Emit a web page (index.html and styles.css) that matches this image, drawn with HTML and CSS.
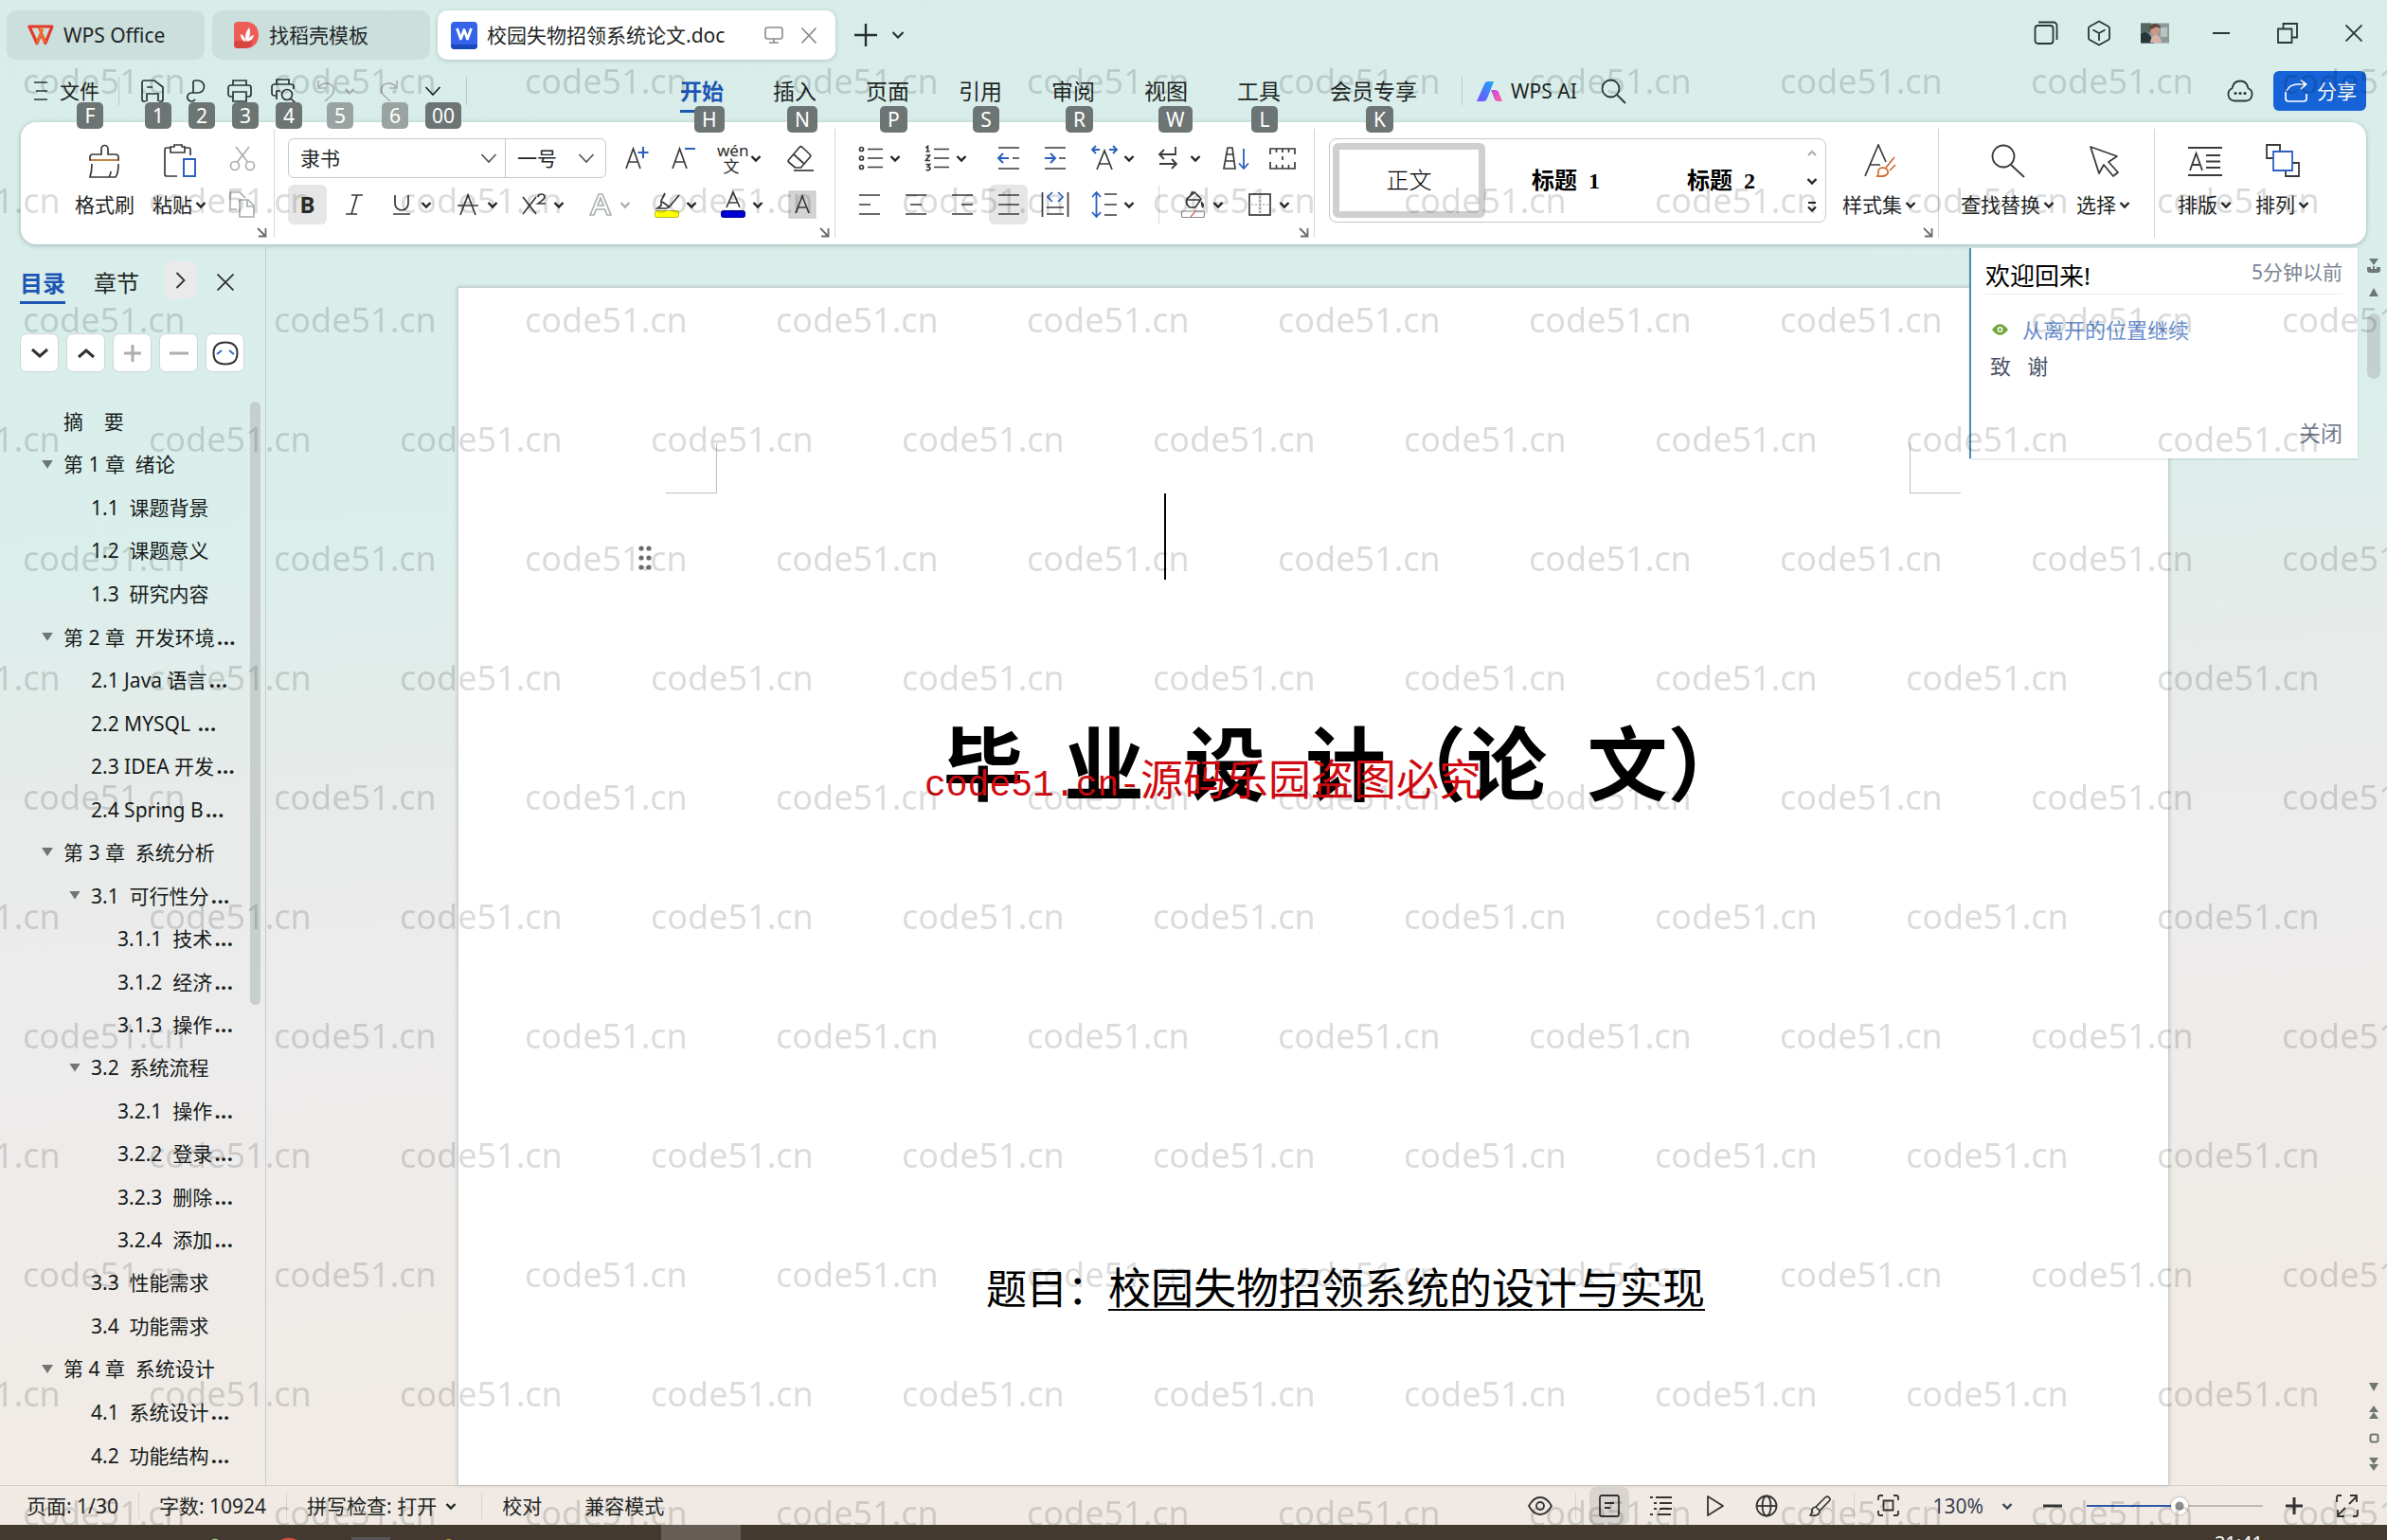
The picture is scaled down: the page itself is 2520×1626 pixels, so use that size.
FILE: index.html
```html
<!DOCTYPE html>
<html lang="zh-CN">
<head>
<meta charset="utf-8">
<title>校园失物招领系统论文.doc - WPS Office</title>
<meta name="viewport" content="width=device-width, initial-scale=1">
<link rel="stylesheet" href="styles.css">
</head>
<body>
<svg class="defs" aria-hidden="true">
  <symbol id="caret" viewBox="0 0 14 14"><path d="M2.500 5l4.500 4.500L11.500 5" fill="none" stroke="currentColor" stroke-width="2.400"/></symbol>
  <symbol id="chev" viewBox="0 0 18 12"><path d="M1.500 2l7.500 8 7.500-8" fill="none" stroke="currentColor" stroke-width="1.700"/></symbol>
  <symbol id="launch" viewBox="0 0 12 12"><path d="M2 2l7.500 7.500M10.500 2v8.500H3" fill="none" stroke="currentColor" stroke-width="1.800"/></symbol>
</svg>

<header class="titlebar">
  <nav class="doctabs" aria-label="文档标签">
    <button class="doctab tab-home">
      <svg width="28" height="22" viewBox="0 0 28 22" fill="none"><path d="M2 2h24L19 19.500 14.500 9.500 10 19.500z" stroke="#e23a2a" stroke-width="3.200" stroke-linejoin="round"/><path d="M10 19.500L16 4.500M12 3l7 16" stroke="#ef6a2c" stroke-width="2.800"/></svg>
      <span>WPS Office</span>
    </button>
    <button class="doctab tab-docer">
      <svg width="26" height="30" viewBox="0 0 26 30"><path d="M4 1h8c9 0 14 6 14 14s-5 14-14 14H4a4 4 0 0 1-4-4V5a4 4 0 0 1 4-4z" fill="#ef5d58"/><path d="M0 25a4 4 0 0 1 4-4h16l-2 6c-2 1-4 2-6 2H4a4 4 0 0 1-4-4z" fill="#d8453f"/><path d="M13 22c-2-5-1-10 3-15 2 5 1 10-3 15zM12 22c-3-1-5-4-5-8 3 1 5 4 5 8zM14 22c1-4 3-6 7-7-1 4-3 6-7 7z" fill="#fff"/></svg>
      <span>找稻壳模板</span>
    </button>
    <button class="doctab tab-doc">
      <svg width="28" height="29" viewBox="0 0 28 29"><rect width="28" height="29" rx="4" fill="#3563ea"/><path d="M0 24h28v1a4 4 0 0 1-4 4H4a4 4 0 0 1-4-4z" fill="#1d49bf"/><path d="M6.500 7l4 11L14 8.500 17.500 18l4-11" fill="none" stroke="#fff" stroke-width="2.800" stroke-linejoin="round"/></svg>
      <span>校园失物招领系统论文.doc</span>
      <svg class="tab-screen" width="20" height="18" viewBox="0 0 20 18" fill="none" stroke="#8b8b8b" stroke-width="1.600"><rect x="1" y="1" width="18" height="12" rx="2.500"/><path d="M10 13v4M5 17h10"/></svg>
      <svg width="16" height="17" viewBox="0 0 16 17" stroke="#8b8b8b" stroke-width="1.600"><path d="M.5.500l15 16M15.500.500l-15 16"/></svg>
    </button>
  </nav>
  <button class="newtab" aria-label="新建"><svg width="24" height="24" viewBox="0 0 24 24" stroke="#26302f" stroke-width="2.400"><path d="M12 0v24M0 12h24"/></svg></button>
  <button class="tablist" aria-label="标签列表"><svg width="12" height="8" viewBox="0 0 12 8"><path d="M.500 1L6 6.500 11.500 1" fill="none" stroke="#26302f" stroke-width="2"/></svg></button>
  <div class="wincontrols">
    <button aria-label="标签视图"><svg width="26" height="26" viewBox="0 0 26 26" fill="none" stroke="#2b3635" stroke-width="1.800"><rect x="1.500" y="5" width="19" height="19" rx="3"/><path d="M5 1.500h16a3.500 3.500 0 0 1 3.500 3.500v15"/></svg></button>
    <button aria-label="应用"><svg width="26" height="28" viewBox="0 0 26 28" fill="none" stroke="#2b3635" stroke-width="1.800" stroke-linejoin="round"><path d="M13 1.500l10 5.500q1 .6 1 2v10q0 1.400-1 2l-10 5.500-10-5.500q-1-.6-1-2v-10q0-1.400 1-2zM6.500 10.500L13 14l6.500-3.500M13 14v8"/></svg></button>
    <button class="account" aria-label="账户"><svg width="30" height="36" viewBox="0 0 30 36"><rect y="7.500" width="30" height="21" fill="#8b9a95"/><rect y="7.500" width="11" height="10" fill="#55685f"/><path d="M0 28.500v-10q6-4 10 2l4 8z" fill="#26363a"/><ellipse cx="15" cy="15" rx="5" ry="6" fill="#c9978a"/><path d="M9 15q0-7 6-7t6 5q-5-3-8 0z" fill="#5b4640"/><path d="M10 28q1-8 6-8t6 8z" fill="#d9b3a6"/><path d="M21 12h7v10h-7z" fill="#b9c4c2"/></svg></button>
    <button class="win-wide" aria-label="最小化"><svg width="18" height="2" viewBox="0 0 18 2"><path d="M0 1h18" stroke="#2b3635" stroke-width="2"/></svg></button>
    <button class="win-wide" aria-label="还原"><svg width="22" height="22" viewBox="0 0 22 22" fill="none" stroke="#2b3635" stroke-width="1.800"><path d="M1 6.500h14.500V21H1zM6.500 6V1H21v14.500h-5"/></svg></button>
    <button class="win-wide" aria-label="关闭"><svg width="18" height="18" viewBox="0 0 18 18" stroke="#2b3635" stroke-width="1.800"><path d="M.5.500l17 17M17.500.500l-17 17"/></svg></button>
  </div>
</header>

<div class="menubar">
  <button class="filemenu"><svg width="16" height="20" viewBox="0 0 16 20" stroke="#2b3635" stroke-width="1.700"><path d="M1 1h14M3 10h12M1 19h14"/></svg><span>文件</span><kbd class="key key-file">F</kbd></button>
  <i class="vsep"></i>
  <div class="quick">
    <button aria-label="保存"><svg width="24" height="24" viewBox="0 0 24 24" fill="none" stroke="#2b3635" stroke-width="1.700"><path d="M5 23H3a2 2 0 0 1-2-2V3a2 2 0 0 1 2-2h11l9 7v13a2 2 0 0 1-2 2h-2M6 23v-8h12v8M6 8h6"/></svg><kbd class="key">1</kbd></button>
    <button aria-label="输出为PDF"><svg width="24" height="24" viewBox="0 0 24 24" fill="none" stroke="#2b3635" stroke-width="1.700"><path d="M9 14V3q0-2 2-2h3a6.500 6.500 0 0 1 0 13H7a4.500 4.500 0 1 0 4 7"/></svg><kbd class="key">2</kbd></button>
    <button aria-label="打印"><svg width="26" height="24" viewBox="0 0 26 24" fill="none" stroke="#2b3635" stroke-width="1.700"><path d="M6 6V1h14v5M6 18H3.500A2.500 2.500 0 0 1 1 15.500v-7A2.500 2.500 0 0 1 3.500 6h19A2.500 2.500 0 0 1 25 8.500v7a2.500 2.500 0 0 1-2.500 2.500H20M6 13h14v10H6z"/></svg><kbd class="key">3</kbd></button>
    <button aria-label="打印预览"><svg width="26" height="26" viewBox="0 0 26 26" fill="none" stroke="#2b3635" stroke-width="1.700"><path d="M6 6V1h13v5M6 18H3.500A2.500 2.500 0 0 1 1 15.500v-7A2.500 2.500 0 0 1 3.500 6h18A2.500 2.500 0 0 1 24 8.500V11M6 22v-9h4"/><circle cx="17" cy="17" r="5.500"/><path d="M21 21l4.500 4.500"/></svg><kbd class="key">4</kbd></button>
    <button class="dim quick-dd" aria-label="撤销"><svg width="20" height="24" viewBox="0 0 20 24" fill="none" stroke="currentColor" stroke-width="1.700"><path d="M2 1v8h8M2 9q4-6 10-5 6 1 6.500 7 0 3-2 5L9 23"/></svg><svg width="14" height="14"><use href="#caret"/></svg><kbd class="key key-dim">5</kbd></button>
    <button class="dim" aria-label="恢复"><svg width="20" height="24" viewBox="0 0 20 24" fill="none" stroke="currentColor" stroke-width="1.700"><path d="M18 1v8h-8M18 9Q14 3 8 4q-6 1-6.500 7 0 3 2 5l7.500 7"/></svg><kbd class="key key-dim">6</kbd></button>
    <button aria-label="自定义"><svg width="18" height="12"><use href="#chev"/></svg><kbd class="key">00</kbd></button>
  </div>
  <i class="vsep"></i>
  <nav class="tabs" aria-label="功能区">
    <a href="#" class="on">开始<kbd class="key">H</kbd></a>
    <a href="#">插入<kbd class="key">N</kbd></a>
    <a href="#">页面<kbd class="key">P</kbd></a>
    <a href="#">引用<kbd class="key">S</kbd></a>
    <a href="#">审阅<kbd class="key">R</kbd></a>
    <a href="#">视图<kbd class="key">W</kbd></a>
    <a href="#">工具<kbd class="key">L</kbd></a>
    <a href="#" class="vip">会员专享<kbd class="key">K</kbd></a>
  </nav>
  <i class="vsep"></i>
  <button class="ai"><svg width="27" height="21" viewBox="0 0 27 21"><defs><linearGradient id="aiA" x1="0" y1="1" x2="1" y2="0"><stop offset="0" stop-color="#7a4dff"/><stop offset="1" stop-color="#18a8f5"/></linearGradient><linearGradient id="aiB" x1="0" y1="0" x2="1" y2="1"><stop offset="0" stop-color="#c04be8"/><stop offset="1" stop-color="#ff5f9e"/></linearGradient></defs><path d="M0 21L8.500 2Q9.500 0 12 0h6L11 18q-1 3-4 3z" fill="url(#aiA)"/><path d="M15 9h5q2 0 3 2l4 10h-5q-2 0-3-2z" fill="url(#aiB)"/></svg><span>WPS AI</span></button>
  <button class="find" aria-label="搜索"><svg width="27" height="27" viewBox="0 0 27 27" fill="none" stroke="#2b3635" stroke-width="1.800"><circle cx="10.500" cy="10.500" r="9"/><path d="M17 17l9 9"/></svg></button>
  <button class="cloud" aria-label="云同步"><svg width="28" height="24" viewBox="0 0 28 24"><path d="M8 22.500a7 7 0 0 1-2.500-13.300Q7 1.500 14 1.500t8.500 7.700A7 7 0 0 1 20 22.500z" fill="none" stroke="#2b3635" stroke-width="1.800"/><g fill="#2b3635"><circle cx="9" cy="14.500" r="1.600"/><circle cx="14" cy="14.500" r="1.600"/><circle cx="19" cy="14.500" r="1.600"/></g></svg></button>
  <button class="share"><svg width="24" height="24" viewBox="0 0 24 24" fill="none" stroke="#fff" stroke-width="1.700"><path d="M1 13v7a3 3 0 0 0 3 3h16a3 3 0 0 0 3-3v-5M2 12q3-7 12-7h8M17 .500L22.500 5 17 10"/></svg><span>分享</span></button>
</div>

<section class="ribbon" aria-label="开始">
  <div class="group g-clip">
    <div class="body">
      <button class="big"><svg width="34" height="36" viewBox="0 0 34 36" fill="none" stroke="#3a3a3a" stroke-width="1.700"><path d="M13 11V5a3.500 3.500 0 0 1 7 0v6h8a3 3 0 0 1 3 3v3H1v-3a3 3 0 0 1 3-3zM3 21q0 8-2 14h27q3-4 3-14M21 35q2-3 2-6"/><path d="M2 17h28" stroke="#d08a3c"/></svg><span>格式刷</span></button>
      <button class="big"><svg width="36" height="36" viewBox="0 0 36 36" fill="none" stroke="#3a3a3a" stroke-width="1.700"><path d="M15 34H4a2 2 0 0 1-2-2V6a2 2 0 0 1 2-2h4M23 4h4a2 2 0 0 1 2 2v6M8 9V3h4V1h8v2h3v6z"/><path d="M22 16h12v18H22z" stroke="#2b62c0" stroke-width="2"/></svg><span>粘贴<svg width="14" height="14"><use href="#caret"/></svg></span></button>
      <div class="rows">
        <button class="sm dim" aria-label="剪切"><svg width="28" height="28" viewBox="0 0 28 28" fill="none" stroke="currentColor" stroke-width="1.700"><circle cx="6" cy="22" r="4.500"/><circle cx="22" cy="22" r="4.500"/><path d="M8.500 18L21 2M19.500 18L7 2"/></svg></button>
        <button class="sm dim" aria-label="复制"><svg width="30" height="30" viewBox="0 0 30 30" fill="none" stroke="currentColor" stroke-width="1.700"><path d="M9 20H2V2h10l6 6M12 10h9l6 6v12H12zM20 10v7h7"/></svg></button>
      </div>
    </div>
    <button class="launcher" aria-label="剪贴板选项"><svg width="12" height="12"><use href="#launch"/></svg></button>
  </div>

  <div class="group g-font">
    <div class="rows">
      <div class="row">
        <div class="fontbox">
          <label class="pick pick-name"><select aria-label="字体"><option>隶书</option></select><svg width="18" height="12"><use href="#chev"/></svg></label>
          <label class="pick pick-size"><select aria-label="字号"><option>一号</option></select><svg width="18" height="12"><use href="#chev"/></svg></label>
        </div>
        <button class="sm" aria-label="增大字号"><svg width="30" height="30" viewBox="0 0 30 30" fill="none" stroke="#3a3a3a" stroke-width="1.700"><path d="M3 26L10.500 5 18 26M6 19h9"/><path d="M21 3v12M15.500 9h11" stroke="#2b5fc0" stroke-width="2"/></svg></button>
        <button class="sm" aria-label="减小字号"><svg width="30" height="30" viewBox="0 0 30 30" fill="none" stroke="#3a3a3a" stroke-width="1.700"><path d="M3 26L10.500 5 18 26M6 19h9"/><path d="M16 5h11" stroke="#2b5fc0" stroke-width="2"/></svg></button>
        <button class="dd" aria-label="拼音指南"><span class="pinyin"><b>wén</b><b>文</b></span><svg width="14" height="14"><use href="#caret"/></svg></button>
        <button class="sm sm-end" aria-label="清除格式"><svg width="30" height="30" viewBox="0 0 30 30" fill="none" stroke="#3a3a3a" stroke-width="1.700" stroke-linejoin="round"><path d="M2.500 17L14 3.500q1.500-1.500 3 0L25 11q1.500 1.500 0 3L15.500 25h-6l-7-6q-1-1 0-2zM8 11l11 10"/><path d="M8 28h21"/></svg></button>
      </div>
      <div class="row">
        <button class="sm active" aria-label="加粗"><b class="glyph">B</b></button>
        <button class="sm" aria-label="倾斜"><svg width="30" height="30" viewBox="0 0 30 30" stroke="#3a3a3a" stroke-width="1.700"><path d="M12 5h12M6 25h12M18 5l-6 20"/></svg></button>
        <button class="dd" aria-label="下划线"><svg width="30" height="30" viewBox="0 0 30 30" fill="none" stroke="#3a3a3a" stroke-width="1.700"><path d="M8 5v9a7 7 0 0 0 14 0V5M6 25h18"/></svg><svg width="14" height="14"><use href="#caret"/></svg></button>
        <button class="dd" aria-label="删除线"><svg width="30" height="30" viewBox="0 0 30 30" fill="none" stroke="#3a3a3a" stroke-width="1.700"><path d="M7 26l8-21 8 21M4 16h22"/></svg><svg width="14" height="14"><use href="#caret"/></svg></button>
        <button class="dd" aria-label="上标"><svg width="30" height="30" viewBox="0 0 30 30" fill="none" stroke="#3a3a3a" stroke-width="1.700"><path d="M3 7l14 18M17 7L3 25M19 7q0-3 3.500-3t3.500 3q0 2-7 7h8"/></svg><svg width="14" height="14"><use href="#caret"/></svg></button>
        <button class="dd dim" aria-label="文字效果"><svg width="30" height="30" viewBox="0 0 30 30" fill="none" stroke="currentColor" stroke-width="1.600"><path d="M4 26L13 4h4l9 22h-4l-2.500-6h-9L8 26zM12 16h6l-3-8z"/></svg><svg width="14" height="14"><use href="#caret"/></svg></button>
        <button class="dd" aria-label="突出显示"><svg width="30" height="30" viewBox="0 0 30 30" fill="none" stroke="#3a3a3a" stroke-width="1.700"><path d="M13 3L9 11v5l-4 3h9l3-1L28 5M10 12l7 5M5 19h9"/><rect x="2.500" y="21.500" width="25" height="7" rx="2" fill="#ffff00" stroke="#b9b92a" stroke-width="1"/></svg><svg width="14" height="14"><use href="#caret"/></svg></button>
        <button class="dd" aria-label="字体颜色"><svg width="30" height="30" viewBox="0 0 30 30" fill="none" stroke="#3a3a3a" stroke-width="1.700"><path d="M8 18l7-16 7 16M10.500 13h9"/><rect x="2.500" y="21.500" width="25" height="7" rx="2" fill="#0000d8" stroke="#0000a0" stroke-width="1"/></svg><svg width="14" height="14"><use href="#caret"/></svg></button>
        <button class="sm sm-end" aria-label="字符底纹"><svg width="30" height="30" viewBox="0 0 30 30" fill="none" stroke="#3a3a3a" stroke-width="1.700"><rect x="1" y="1" width="28" height="28" fill="#d4d4d4" stroke="#c2c2c2" stroke-width="1"/><path d="M8 24l7-18 7 18M10.500 18h9"/></svg></button>
      </div>
    </div>
    <button class="launcher" aria-label="字体选项"><svg width="12" height="12"><use href="#launch"/></svg></button>
  </div>

  <div class="group g-para">
    <div class="rows">
      <div class="row">
        <button class="dd" aria-label="项目符号"><svg width="30" height="30" viewBox="0 0 30 30" fill="none" stroke="#3a3a3a" stroke-width="1.700"><circle cx="5.500" cy="5.500" r="2"/><circle cx="5.500" cy="15" r="2"/><circle cx="5.500" cy="24.500" r="2"/><path d="M12 5.500h16M12 15h16M12 24.500h16"/></svg><svg width="14" height="14"><use href="#caret"/></svg></button>
        <button class="dd" aria-label="编号"><svg width="30" height="30" viewBox="0 0 30 30" fill="none" stroke="#3a3a3a" stroke-width="1.700"><path d="M12 5.500h16M12 15h16M12 24.500h16M3.500 4l2-1.500V8M3.500 8h4M3.500 12h4l-4 5.500h4.500M3.500 21.500h4l-2 2.500q2.500 0 2.500 2t-4.500 1.500"/></svg><svg width="14" height="14"><use href="#caret"/></svg></button>
        <span class="gap7"></span>
        <button class="sm" aria-label="减少缩进"><svg width="30" height="30" viewBox="0 0 30 30" fill="none" stroke="#3a3a3a" stroke-width="1.700"><path d="M4 4h22M4 26h22M19 15h7"/><path d="M15 15H4M9 10l-5 5 5 5" stroke="#2b5fc0" stroke-width="2"/></svg></button>
        <button class="sm" aria-label="增加缩进"><svg width="30" height="30" viewBox="0 0 30 30" fill="none" stroke="#3a3a3a" stroke-width="1.700"><path d="M4 4h22M4 26h22M19 15h7"/><path d="M4 15h11M10 10l5 5-5 5" stroke="#2b5fc0" stroke-width="2"/></svg></button>
        <button class="dd dd-in" aria-label="中文版式"><svg width="30" height="30" viewBox="0 0 30 30" fill="none" stroke="#3a3a3a" stroke-width="1.700"><path d="M7 27l8-20 8 20M9.500 21h11"/><path d="M10 6H2M6 2L2 6l4 4M20 6h8M24 2l4 4-4 4" stroke="#2b5fc0" stroke-width="1.800"/></svg><svg width="14" height="14"><use href="#caret"/></svg></button>
        <button class="dd" aria-label="换行"><svg width="30" height="30" viewBox="0 0 30 30" fill="none" stroke="#3a3a3a" stroke-width="1.800"><path d="M20 3v8H3M8 6l-5 5 5 5M3 21h18M16 16l5 5-5 5"/></svg><svg width="14" height="14"><use href="#caret"/></svg></button>
        <button class="sm" aria-label="排序"><svg width="30" height="30" viewBox="0 0 30 30" fill="none" stroke="#3a3a3a" stroke-width="1.700"><path d="M2 26L6 4h5l3 22zM5 11h7M4 18h9"/><path d="M23 5v21M18 20.500l5 5.500 5-5.500" stroke="#2b5fc0" stroke-width="1.800"/></svg></button>
        <button class="sm" aria-label="标尺"><svg width="30" height="30" viewBox="0 0 30 30" fill="none" stroke="#3a3a3a" stroke-width="1.700"><path d="M2 11V5h26v6M2 19v7h26v-7M8.500 5v4M15 5v4M21.500 5v4M8.500 26v-4M15 26v-4M21.500 26v-4M15 13v4"/></svg></button>
      </div>
      <div class="row">
        <button class="sm" aria-label="左对齐"><svg width="30" height="30" viewBox="0 0 30 30" stroke="#3a3a3a" stroke-width="1.700"><path d="M4 5h22M4 15h12M4 25h22"/></svg></button>
        <button class="sm" aria-label="居中"><svg width="30" height="30" viewBox="0 0 30 30" stroke="#3a3a3a" stroke-width="1.700"><path d="M4 5h22M9 15h12M4 25h22"/></svg></button>
        <button class="sm" aria-label="右对齐"><svg width="30" height="30" viewBox="0 0 30 30" stroke="#3a3a3a" stroke-width="1.700"><path d="M4 5h22M14 15h12M4 25h22"/></svg></button>
        <button class="sm active" aria-label="两端对齐"><svg width="30" height="30" viewBox="0 0 30 30" stroke="#3a3a3a" stroke-width="1.700"><path d="M4 5h22M4 15h22M4 25h22"/></svg></button>
        <button class="sm" aria-label="分散对齐"><svg width="30" height="30" viewBox="0 0 30 30" fill="none" stroke="#3a3a3a" stroke-width="1.700"><path d="M1.500 2v26M28.500 2v26M6 18h18M6 25h18"/><path d="M12 2L7 7l5 5M18 2l5 5-5 5" stroke="#2b5fc0"/></svg></button>
        <button class="dd dd-in" aria-label="行距"><svg width="30" height="30" viewBox="0 0 30 30" fill="none" stroke="#3a3a3a" stroke-width="1.700"><path d="M15 4h13M15 15h13M15 26h13"/><path d="M6.500 3v24M2 7l4.500-5L11 7M2 23l4.500 5 4.500-5" stroke="#2b5fc0" stroke-width="1.800"/></svg><svg width="14" height="14"><use href="#caret"/></svg></button>
        <i class="rsep"></i>
        <button class="dd" aria-label="底纹颜色"><svg width="30" height="30" viewBox="0 0 30 30" fill="none" stroke="#3a3a3a" stroke-width="1.700"><path d="M8 9l8-7 7 7-6 9h-6q-5-4-3-9zM14 1l-2 4M8 10h14"/><path d="M23 11q5 4 2 8-3-2-2-8z" fill="#3a3a3a" stroke="none"/><rect x="2.500" y="22" width="24" height="6.500" rx="1.500" stroke="#8a8a8a" stroke-width="1.200"/><path d="M12 28l5-6" stroke="#e06060" stroke-width="1.200"/></svg><svg width="14" height="14"><use href="#caret"/></svg></button>
        <button class="dd" aria-label="边框"><svg width="30" height="30" viewBox="0 0 30 30" fill="none" stroke="#3a3a3a" stroke-width="1.700"><rect x="4" y="4" width="22" height="22"/><path d="M15 6v18M6 15h18" stroke="#b5b5b5" stroke-dasharray="2 2"/></svg><svg width="14" height="14"><use href="#caret"/></svg></button>
      </div>
    </div>
    <button class="launcher" aria-label="段落选项"><svg width="12" height="12"><use href="#launch"/></svg></button>
  </div>

  <div class="group g-style">
    <div class="body">
      <div class="gallery">
        <button class="style picked">正文</button>
        <button class="style head">标题  1</button>
        <button class="style head">标题  2</button>
        <div class="gal-nav">
          <button class="dim" aria-label="上一行"><svg width="14" height="14" viewBox="0 0 14 14"><path d="M3 9l4-4 4 4" fill="none" stroke="currentColor" stroke-width="2"/></svg></button>
          <button aria-label="下一行"><svg width="14" height="14"><use href="#caret"/></svg></button>
          <button aria-label="更多样式"><svg width="14" height="14" viewBox="0 0 14 14"><path d="M3 2h8M3 6.500l4 4 4-4" fill="none" stroke="currentColor" stroke-width="2.200"/></svg></button>
        </div>
      </div>
      <button class="big"><svg width="34" height="36" viewBox="0 0 34 36" fill="none" stroke="#3a3a3a" stroke-width="1.700"><path d="M1 34L15 1l8 18M6 22h11"/><g stroke="#cf6a2c"><path d="M32 14L23 25M33 22l-6 6M14 34q1-1 1-5t5-4q6 1 5 6-2 4-11 3z"/></g></svg><span>样式集<svg width="14" height="14"><use href="#caret"/></svg></span></button>
    </div>
    <button class="launcher" aria-label="样式选项"><svg width="12" height="12"><use href="#launch"/></svg></button>
  </div>

  <div class="group g-edit">
    <div class="body">
      <button class="big"><svg width="36" height="36" viewBox="0 0 36 36" fill="none" stroke="#3a3a3a" stroke-width="1.800"><circle cx="13" cy="13" r="11.500"/><path d="M21 22l14 13"/></svg><span>查找替换<svg width="14" height="14"><use href="#caret"/></svg></span></button>
      <button class="big"><svg width="34" height="36" viewBox="0 0 34 36" fill="none" stroke="#3a3a3a" stroke-width="1.800" stroke-linejoin="round"><path d="M3 3l28 10-9 6 10 11-5 4-10-12-5 9z"/></svg><span>选择<svg width="14" height="14"><use href="#caret"/></svg></span></button>
    </div>
  </div>

  <div class="group g-layout">
    <div class="body">
      <button class="big"><svg width="36" height="36" viewBox="0 0 36 36" fill="none" stroke="#3a3a3a" stroke-width="1.800"><path d="M0 4h36M0 33h36M19 12h15M19 18.500h15M19 25h15M2 28l6.500-18L15 28M4.500 22h8"/></svg><span>排版<svg width="14" height="14"><use href="#caret"/></svg></span></button>
      <button class="big"><svg width="36" height="36" viewBox="0 0 36 36" fill="none" stroke="#3a3a3a" stroke-width="1.800"><path d="M8 15H1V1h14v6M28 20h7v14H21v-6"/><path d="M8 8h20v20H8z" stroke="#2b5fc0"/></svg><span>排列<svg width="14" height="14"><use href="#caret"/></svg></span></button>
    </div>
  </div>
</section>

<main class="work">
  <aside class="side">
    <div class="side-head">
      <button class="side-tab on">目录</button>
      <button class="side-tab">章节</button>
      <button class="side-more" aria-label="更多"><svg width="11" height="18" viewBox="0 0 11 18"><path d="M1.500 1L9.500 9l-8 8" fill="none" stroke="#333" stroke-width="1.800"/></svg></button>
      <button class="side-close" aria-label="关闭"><svg width="18" height="18" viewBox="0 0 18 18" stroke="#333" stroke-width="1.800"><path d="M.5.500l17 17M17.500.500l-17 17"/></svg></button>
    </div>
    <div class="side-tools">
      <button aria-label="展开"><svg width="18" height="12" viewBox="0 0 18 12"><path d="M1 2l8 7 8-7" fill="none" stroke="#333" stroke-width="3"/></svg></button>
      <button aria-label="收起"><svg width="18" height="12" viewBox="0 0 18 12"><path d="M1 10l8-7 8 7" fill="none" stroke="#333" stroke-width="3"/></svg></button>
      <button aria-label="增加"><svg width="18" height="18" viewBox="0 0 18 18" stroke="#adadad" stroke-width="3"><path d="M9 0v18M0 9h18"/></svg></button>
      <button aria-label="减少"><svg width="20" height="4" viewBox="0 0 20 4"><path d="M0 2h20" stroke="#adadad" stroke-width="3"/></svg></button>
      <button aria-label="智能目录"><svg width="28" height="26" viewBox="0 0 28 26" fill="none"><path d="M14 1.500c9 0 12.500 4 12.500 11.500S23 24.500 14 24.500 1.500 20.500 1.500 13 5 1.500 14 1.500z" stroke="#333" stroke-width="2"/><path d="M5 14l5-4M23 14l-5-4" stroke="#2b5fc0" stroke-width="1.800"/></svg></button>
    </div>
    <div class="toc-wrap">
      <ul class="toc">
        <li class="l1"><a href="#">摘    要</a></li>
        <li class="l1 open"><a href="#">第 1 章  绪论</a></li>
        <li class="l2"><a href="#">1.1  课题背景</a></li>
        <li class="l2"><a href="#">1.2  课题意义</a></li>
        <li class="l2"><a href="#">1.3  研究内容</a></li>
        <li class="l1 open"><a href="#">第 2 章  开发环境<span class="more">...</span></a></li>
        <li class="l2"><a href="#">2.1 Java 语言<span class="more">...</span></a></li>
        <li class="l2"><a href="#">2.2 MYSQL <span class="more">...</span></a></li>
        <li class="l2"><a href="#">2.3 IDEA 开发<span class="more">...</span></a></li>
        <li class="l2"><a href="#">2.4 Spring B<span class="more">...</span></a></li>
        <li class="l1 open"><a href="#">第 3 章  系统分析</a></li>
        <li class="l2 open"><a href="#">3.1  可行性分<span class="more">...</span></a></li>
        <li class="l3"><a href="#">3.1.1  技术<span class="more">...</span></a></li>
        <li class="l3"><a href="#">3.1.2  经济<span class="more">...</span></a></li>
        <li class="l3"><a href="#">3.1.3  操作<span class="more">...</span></a></li>
        <li class="l2 open"><a href="#">3.2  系统流程</a></li>
        <li class="l3"><a href="#">3.2.1  操作<span class="more">...</span></a></li>
        <li class="l3"><a href="#">3.2.2  登录<span class="more">...</span></a></li>
        <li class="l3"><a href="#">3.2.3  删除<span class="more">...</span></a></li>
        <li class="l3"><a href="#">3.2.4  添加<span class="more">...</span></a></li>
        <li class="l2"><a href="#">3.3  性能需求</a></li>
        <li class="l2"><a href="#">3.4  功能需求</a></li>
        <li class="l1 open"><a href="#">第 4 章  系统设计</a></li>
        <li class="l2"><a href="#">4.1  系统设计<span class="more">...</span></a></li>
        <li class="l2"><a href="#">4.2  功能结构<span class="more">...</span></a></li>
      </ul>
      <div class="toc-bar"></div>
    </div>
  </aside>

  <div class="canvas">
    <article class="page">
      <div class="crops"><i class="crop crop-l"></i><i class="crop crop-r"></i></div>
      <div class="caretline">
        <svg class="grip" width="14" height="26" viewBox="0 0 14 26" fill="#6b6b6b"><circle cx="3" cy="3" r="2.600"/><circle cx="11" cy="3" r="2.600"/><circle cx="3" cy="13" r="2.600"/><circle cx="11" cy="13" r="2.600"/><circle cx="3" cy="23" r="2.600"/><circle cx="11" cy="23" r="2.600"/></svg>
        <i class="cursor"></i>
      </div>
      <h1 class="doc-title">毕&ensp;业&ensp;设&ensp;计（论&ensp;文）</h1>
      <p class="doc-subject"><span>题目：</span><u>校园失物招领系统的设计与实现</u></p>
    </article>
  </div>

  <div class="vscroll">
    <button aria-label="标尺开关"><svg width="14" height="15" viewBox="0 0 14 15" fill="#6f7775"><path d="M2 0h10L7 7zM0 9h4v2h2V8h2v3h2V9h4v3q0 3-3 3H3q-3 0-3-3z"/></svg></button>
    <button class="vs-up" aria-label="向上"><svg width="10" height="9" viewBox="0 0 10 9"><path d="M5 0l5 9H0z" fill="#6f7775"/></svg></button>
    <div class="vs-thumb"></div>
    <div class="vs-foot">
      <button aria-label="向下"><svg width="10" height="9" viewBox="0 0 10 9"><path d="M5 9l5-9H0z" fill="#6f7775"/></svg></button>
      <button aria-label="上一页"><svg width="10" height="14" viewBox="0 0 10 14"><path d="M5 0l5 7H0zM5 7l5 7H0z" fill="#6f7775"/></svg></button>
      <button aria-label="选择浏览对象"><svg width="11" height="11" viewBox="0 0 11 11"><rect x="1.500" y="1.500" width="8" height="8" rx="2" fill="none" stroke="#6f7775" stroke-width="2"/></svg></button>
      <button aria-label="下一页"><svg width="10" height="14" viewBox="0 0 10 14"><path d="M5 7l5-7H0zM5 14l5-7H0z" fill="#6f7775"/></svg></button>
    </div>
  </div>

  <p class="notice">code51.cn-<span>源码乐园盗图必究</span></p>

  <section class="welcome" aria-label="欢迎回来">
    <header><h2>欢迎回来!</h2><time>5分钟以前</time></header>
    <p class="resume"><svg width="17" height="12" viewBox="0 0 17 12"><path d="M0 6Q8.500-5.500 17 6 8.500 17.500 0 6z" fill="#6ea63c"/><circle cx="8.500" cy="6" r="3" fill="#fff"/><circle cx="8.500" cy="6" r="1.600" fill="#6ea63c"/></svg><a href="#">从离开的位置继续</a></p>
    <p class="where">致   谢</p>
    <button class="dismiss">关闭</button>
  </section>
</main>

<footer class="status">
  <div class="stat-left">
    <span>页面: 1/30</span><i class="ssep"></i>
    <span>字数: 10924</span><i class="ssep"></i>
    <button class="spell">拼写检查: 打开<svg width="14" height="14"><use href="#caret"/></svg></button><i class="ssep"></i>
    <button>校对</button>
    <span class="compat">兼容模式</span>
  </div>
  <div class="stat-right">
    <button aria-label="护眼模式"><svg width="26" height="20" viewBox="0 0 26 20" fill="none" stroke="#333" stroke-width="1.800"><path d="M1 10Q6 1 13 1t12 9q-5 9-12 9T1 10z"/><circle cx="13" cy="10" r="4"/></svg></button>
    <i class="ssep"></i>
    <button class="view-on" aria-label="页面视图"><svg width="22" height="24" viewBox="0 0 22 24" fill="none" stroke="#333" stroke-width="1.800"><rect x="1" y="1" width="20" height="22" rx="2"/><path d="M6 9h10M6 14h6"/></svg></button>
    <button aria-label="大纲"><svg width="24" height="22" viewBox="0 0 24 22" stroke="#333" stroke-width="1.900"><path d="M0 2h3M6 2h17M4 8h3M10 8h13M4 14h3M10 14h13M0 20h3M8 20h14"/></svg></button>
    <button class="read" aria-label="阅读版式"><svg width="20" height="24" viewBox="0 0 20 24" fill="none" stroke="#333" stroke-width="1.800" stroke-linejoin="round"><path d="M2 2l16 10L2 22z"/></svg></button>
    <button aria-label="Web版式"><svg width="24" height="24" viewBox="0 0 24 24" fill="none" stroke="#333" stroke-width="1.800"><circle cx="12" cy="12" r="10.500"/><ellipse cx="12" cy="12" rx="4.500" ry="10.500"/><path d="M1.500 12h21"/></svg></button>
    <button aria-label="写作模式"><svg width="24" height="24" viewBox="0 0 24 24" fill="none" stroke="#333" stroke-width="1.700" stroke-linejoin="round"><path d="M8 13L18 3q2-2 4 0t0 4L12 17zM8 13q-5 1-4 6l-2 3q7 1 9-2 1-1 1-3z"/></svg></button>
    <i class="ssep"></i>
    <button aria-label="适合页面"><svg width="23" height="23" viewBox="0 0 23 23" fill="none" stroke="#333" stroke-width="1.800"><path d="M1 6V3q0-2 2-2h3M17 1h3q2 0 2 2v3M22 17v3q0 2-2 2h-3M6 22H3q-2 0-2-2v-3M6.500 6.500h10v10h-10z"/></svg></button>
    <button class="pct">130%<svg width="14" height="14"><use href="#caret"/></svg></button>
    <button class="minus" aria-label="缩小"><svg width="20" height="4" viewBox="0 0 20 4"><path d="M0 2h20" stroke="#333" stroke-width="3"/></svg></button>
    <input class="zoom" type="range" min="0" max="100" value="53" aria-label="缩放">
    <button class="plus" aria-label="放大"><svg width="18" height="18" viewBox="0 0 18 18" stroke="#333" stroke-width="3"><path d="M9 0v18M0 9h18"/></svg></button>
    <button aria-label="全屏"><svg width="24" height="24" viewBox="0 0 24 24" fill="none" stroke="#333" stroke-width="1.800"><path d="M1 8V3q0-2 2-2h3M14 10l8-8M15 1h7v7M23 16v5q0 2-2 2h-3M10 14l-8 8M9 23H2v-7"/></svg></button>
  </div>
</footer>

<div class="taskbar">
  <svg width="560" height="3" viewBox="0 0 560 3"><path d="M223 3q4-3 8 0z" fill="#9bbf7a"/><path d="M296 3q9-5 18 0z" fill="#d8483c"/><path d="M371 0h41v3h-41z" fill="#5a5558"/><path d="M470 3q4-2 7 0z" fill="#b8a53a"/></svg>
  <i class="task-on"></i>
  <time>21:41</time>
</div>

<div class="watermark" aria-hidden="true"></div>
<script src="watermark.js"></script>
</body>
</html>
```
FILE: styles.css
```css
* { box-sizing: border-box; }

html, body { height: 100%; margin: 0; }

body {
  display: flex;
  flex-direction: column;
  overflow: hidden;
  color: #1f2625;
  font: 21px/30px "Noto Sans", "Noto Sans CJK SC", sans-serif;
  background: linear-gradient(176deg, #d8ede9 0%, #daefec 32%, #e7ebe9 47%, #edecec 62%, #f0ebe6 84%, #f3eae4 100%);
}

button, select, input { font: inherit; color: inherit; }
button { display: flex; align-items: center; padding: 0; border: 0; background: none; white-space: nowrap; }
svg { display: block; flex: none; }
a { color: inherit; text-decoration: none; }
p, h1, h2, ul { margin: 0; padding: 0; }
.defs { position: absolute; width: 0; height: 0; }
.dim { color: #a9aeae; }

/* title bar */
.titlebar { display: flex; height: 73px; padding-left: 7px; flex: none; }
.doctabs { display: flex; gap: 8px; padding-top: 11px; }
.doctab { height: 52px; border-radius: 10px; background: #cbdfdd; }
.tab-home { width: 209px; padding-left: 22px; gap: 10px; }
.tab-docer { width: 230px; padding-left: 23px; gap: 11px; }
.tab-doc { width: 420px; padding: 0 20px 0 14px; gap: 10px; background: #fff; box-shadow: 0 1px 4px rgba(60, 90, 90, .3); }
.tab-screen { margin: 0 9px 0 auto; }
.newtab { height: 73px; margin-left: 20px; }
.tablist { height: 73px; margin-left: 16px; }
.wincontrols { display: flex; height: 70px; margin-left: auto; }
.wincontrols button { width: 56px; justify-content: center; }
.wincontrols .win-wide { width: 70px; }
.wincontrols .account { width: 62px; margin-right: 4px; }

/* menu bar */
.menubar { display: flex; align-items: center; height: 56px; padding: 0 22px 10px 35px; flex: none; }
.menubar > button, .quick button, .tabs a { position: relative; }
.filemenu { gap: 12px; }
.vsep { width: 1px; height: 30px; background: #b9cbc9; }
.filemenu + .vsep { margin: 0 12px 0 20px; }
.quick { display: flex; }
.quick button { width: 46px; height: 46px; justify-content: center; }
.quick .quick-dd { width: 66px; gap: 8px; }
.quick + .vsep { margin-left: 12px; }
.key {
  position: absolute;
  top: 35px;
  left: 15px;
  z-index: 2;
  min-width: 28px;
  height: 28px;
  padding: 0 7px;
  border-radius: 5px;
  color: #fff;
  text-align: center;
  font: 400 21px/28px "Noto Sans", sans-serif;
  background: #6d7574;
}
.key-file { top: 27px; left: 46px; }
.key-dim { background: #9ba3a2; }
.quick-dd .key { left: 23px; }
.tabs { display: flex; gap: 52px; margin-left: 225px; font-size: 23px; }
.tabs a { height: 46px; padding-top: 8px; white-space: nowrap; }
.tabs .key { top: 39px; padding: 0 8px; }
.tabs .vip .key { left: 38px; }
.tabs .on { color: #1d56b4; font-weight: 700; border-bottom: 3px solid #1d56b4; }
.tabs + .vsep { margin: 0 15px 0 47px; }
.ai { gap: 9px; }
.find { margin-left: 25px; }
.cloud { margin-left: auto; }
.share { width: 98px; height: 42px; margin-left: 21px; padding-left: 12px; gap: 10px; border-radius: 6px; color: #fff; background: #1663d8; }

/* ribbon */
.ribbon { display: flex; height: 129px; margin: 0 22px; padding: 7px 0; flex: none; border-radius: 16px; background: #fff; box-shadow: 0 1px 5px rgba(60, 90, 90, .4); }
.group { display: flex; flex-direction: column; justify-content: space-between; flex: none; border-right: 1px solid #d3d7d7; }
.group:last-child { border: 0; }
.body { display: flex; }
.rows { display: flex; flex-direction: column; gap: 7px; padding-top: 10px; }
.row { display: flex; align-items: center; height: 42px; }
.big { flex-direction: column; gap: 13px; padding-top: 16px; }
.big span { display: flex; align-items: center; gap: 2px; }
.sm { width: 49px; height: 42px; justify-content: center; }
.sm.active { width: 41px; margin: 0 4px; border-radius: 6px; background: #e6e6e6; }
.sm-end { margin-left: 4px; }
.dd { width: 70px; height: 42px; padding-left: 11px; gap: 4px; }
.dd-in { margin-left: 2px; }
.gap7 { width: 7px; }
.rsep { width: 1px; height: 40px; margin: 0 10px 0 13px; background: #d3d7d7; }
.launcher { align-self: flex-end; margin-right: 5px; color: #6b6b6b; }
.glyph { font-size: 24px; color: #2b2b2b; }
.pinyin { display: flex; flex-direction: column; width: 30px; color: #2b2b2b; text-align: center; }
.pinyin b { height: 17px; font: 400 17px/17px "Noto Sans", "Noto Sans CJK SC", sans-serif; }

.g-clip { width: 268px; padding-left: 57px; }
.g-clip .body { gap: 19px; }
.g-clip .rows { margin-left: -7px; }
.g-clip .launcher { margin-right: 7px; }
.g-font { width: 592px; padding-left: 10px; }
.g-para { width: 506px; padding-left: 11px; }
.g-style { width: 659px; padding-left: 15px; }
.g-style .body { gap: 17px; }
.g-edit { width: 228px; padding-left: 23px; }
.g-edit .body { gap: 22px; }
.g-layout { padding-left: 24px; }
.g-layout .body { gap: 24px; }

.fontbox { display: flex; width: 336px; height: 42px; margin: 0 8px 0 4px; border: 1px solid #c4c8c8; border-radius: 6px; }
.pick { display: grid; align-items: center; }
.pick select { grid-area: 1 / 1; width: 100%; height: 40px; padding: 0 12px; border: 0; background: none; appearance: none; outline: 0; }
.pick svg { grid-area: 1 / 1; justify-self: end; margin-right: 8px; pointer-events: none; color: #555; }
.pick-name { width: 229px; border-right: 1px solid #c4c8c8; }
.pick-size { flex: 1; }
.pick-size svg { margin-right: 11px; }

.gallery { display: grid; grid-template-columns: repeat(3, 164px) 1fr; width: 525px; height: 89px; margin-top: 10px; padding: 4px 0 4px 3px; border: 1px solid #c4c8c8; border-radius: 8px; }
.style { justify-content: center; color: #000; }
.picked { width: 161px; padding-bottom: 3px; border: 7px solid #cfcfcf; border-radius: 6px; font: 300 24px/30px "Noto Sans CJK SC", sans-serif; }
.head { font: 700 24px/30px "Liberation Serif", "Noto Sans CJK SC", serif; white-space: pre; }
.gal-nav { display: flex; flex-direction: column; align-items: center; justify-content: space-between; padding: 4px 0; }

/* work area */
.work { position: relative; display: flex; flex: 1; min-height: 0; }
.side { display: flex; flex-direction: column; width: 281px; padding-top: 18px; flex: none; border-right: 1px solid #c3cdcc; }
.side-head { display: flex; height: 45px; padding-left: 21px; flex: none; font-size: 24px; }
.side-tab { align-items: flex-start; padding-top: 8px; border-bottom: 3px solid transparent; }
.side-tab.on { margin-right: 30px; color: #1d56b4; font-weight: 700; border-color: #1d56b4; }
.side-more { width: 33px; height: 39px; margin-left: 27px; justify-content: center; border-radius: 5px; background: #e9eae9; }
.side-close { height: 44px; margin-left: 22px; }
.side-tools { display: flex; gap: 8px; margin: 31px 0 29px 21px; flex: none; }
.side-tools button { width: 41px; height: 41px; justify-content: center; border: 1px solid #ccd8d6; border-radius: 7px; background: #fff; }
.toc-wrap { display: flex; flex: 1; min-height: 0; padding-bottom: 9px; }
.toc { display: flex; flex-direction: column; flex: 1; min-width: 0; list-style: none; }
.toc li { display: flex; flex: 1; align-items: center; min-height: 0; white-space: pre; color: #161b1a; }
.toc li::before { content: ""; width: 12px; height: 9px; margin-right: 11px; flex: none; }
.toc .open::before { background: #6f7775; clip-path: polygon(0 0, 100% 0, 50% 100%); }
.toc .l1 { padding-left: 44px; }
.toc .l2 { padding-left: 73px; }
.toc .l3 { padding-left: 101px; }
.more { margin-left: 2px; font-size: 24px; font-weight: 600; }
.toc-bar { width: 11px; height: 56%; margin: 2px 5px 0 0; flex: none; border-radius: 6px; background: #c7cfce; }

.canvas { display: flex; flex: 1; min-width: 0; padding: 45px 202px 0; }
.page { flex: 1; min-width: 0; background: #fff; border: 1px solid #c9d0cf; border-bottom: 0; box-shadow: 0 0 4px rgba(80, 90, 90, .3); }
.crops { display: flex; justify-content: space-between; padding: 164px 219px 0; }
.crop { width: 54px; height: 53px; border-bottom: 1px solid #bfbfbf; }
.crop-l { border-right: 1px solid #bfbfbf; }
.crop-r { border-left: 1px solid #bfbfbf; }
.caretline { display: flex; align-items: flex-end; height: 91px; padding-left: 190px; }
.grip { margin: 0 541px 10px 0; }
.cursor { width: 2px; height: 91px; background: #000; }
.doc-title, .doc-subject { padding-left: 68px; color: #000; text-align: center; white-space: nowrap; font-family: "Noto Sans CJK SC", sans-serif; }
.doc-title { margin-top: 144px; font-size: 85px; line-height: 92px; font-weight: 700; }
.doc-subject { margin-top: 480px; font-size: 45px; line-height: 60px; }
.doc-subject span { font-size: 43px; }
.doc-subject u { text-decoration-thickness: 2px; text-underline-offset: 5px; }

/* red notice printed across the document */
.notice { position: absolute; top: 533px; left: 976px; color: #cf0a10; white-space: nowrap; font: 38px/60px "Liberation Mono", monospace; }
.notice span { font: 45px/60px "Noto Sans CJK SC", sans-serif; }

.vscroll { display: flex; flex-direction: column; align-items: center; width: 28px; padding-top: 15px; flex: none; }
.vs-up { margin: 16px 0 18px; }
.vs-thumb { width: 14px; height: 69px; border-radius: 7px; background: #c3d0ce; }
.vs-foot { display: flex; flex-direction: column; align-items: center; gap: 15px; margin-top: auto; padding-bottom: 15px; }

.welcome { position: absolute; top: 4px; right: 31px; width: 410px; height: 222px; padding: 0 16px 0 15px; border-left: 2px solid #4b8db4; background: #fff; box-shadow: 0 1px 2px rgba(90, 110, 110, .25); }
.welcome header { display: flex; justify-content: space-between; height: 49px; padding-top: 10px; border-bottom: 1px solid #ececec; }
.welcome h2 { color: #000; font-size: 26px; line-height: 38px; font-weight: 400; }
.welcome time { color: #7c8494; }
.resume { display: flex; align-items: center; gap: 15px; margin-top: 22px; padding-left: 7px; color: #6c90d0; font-size: 22px; }
.where { margin-top: 8px; padding-left: 5px; color: #4c5568; font-size: 22px; white-space: pre; }
.dismiss { margin: 41px 0 0 auto; color: #747c8e; font-size: 23px; }

/* status bar */
.status { display: flex; justify-content: space-between; height: 42px; flex: none; border-top: 1px solid #d3cdc8; background: #f1eae4; }
.stat-left, .stat-right { display: flex; align-items: center; white-space: nowrap; }
.stat-left { padding-left: 28px; }
.spell { margin-right: 4px; gap: 8px; }
.ssep { width: 1px; height: 28px; margin: 0 21px; background: #d8d2cd; }
.compat { margin-left: 45px; }
.stat-right { padding-right: 30px; gap: 32px; }
.stat-right .ssep { margin: 0 -8px; }
.view-on { width: 42px; height: 40px; margin: 0 -10px; justify-content: center; border-radius: 7px; background: #d9d4cf; }
.read { margin-left: 3px; }
.pct { gap: 18px; margin: 0 -1px 0 4px; color: #3b4352; }
.minus { margin-right: -6px; }
.plus { margin: 0 3px 0 -8px; }
.zoom { width: 186px; height: 20px; margin: 0; appearance: none; background: linear-gradient(#2c5aa8, #2c5aa8) left center / 53% 2px no-repeat, linear-gradient(#bdb9b6, #bdb9b6) center / 100% 2px no-repeat; }
.zoom::-webkit-slider-thumb { appearance: none; width: 18px; height: 18px; border-radius: 50%; background: radial-gradient(#8f8f8f 0 4px, #fff 5px); box-shadow: 0 0 3px rgba(0, 0, 0, .4); }

/* the sliver of the desktop taskbar */
.taskbar { display: flex; align-items: flex-end; height: 16px; padding-right: 131px; flex: none; overflow: hidden; background: #43392f; }
.task-on { width: 84px; height: 16px; margin-left: 138px; background: #665d56; }
.taskbar time { height: 8px; margin-left: auto; color: #fff; font-size: 20px; line-height: 22px; }

.watermark { position: fixed; inset: 0 0 16px; z-index: 5; overflow: hidden; padding-top: 61px; pointer-events: none; color: rgba(0, 0, 0, .14); font: 36px/50px "Noto Sans", sans-serif; }
.wm-row { display: flex; height: 126px; padding-left: 24px; }
.wm-row:nth-child(even) { margin-left: -132px; }
.wm-row span { width: 265px; flex: none; }
```
FILE: watermark.js
```js
// Tiles the watermark text over the whole window, every other row shifted.
const layer = document.querySelector(".watermark");
const perRow = Math.ceil(window.innerWidth / 265) + 1;
const rowCount = Math.ceil(window.innerHeight / 126);
for (let r = 0; r < rowCount; r++) {
  const row = document.createElement("div");
  row.className = "wm-row";
  for (let c = 0; c < perRow; c++) {
    const mark = document.createElement("span");
    mark.textContent = "code51.cn";
    row.append(mark);
  }
  layer.append(row);
}
```
